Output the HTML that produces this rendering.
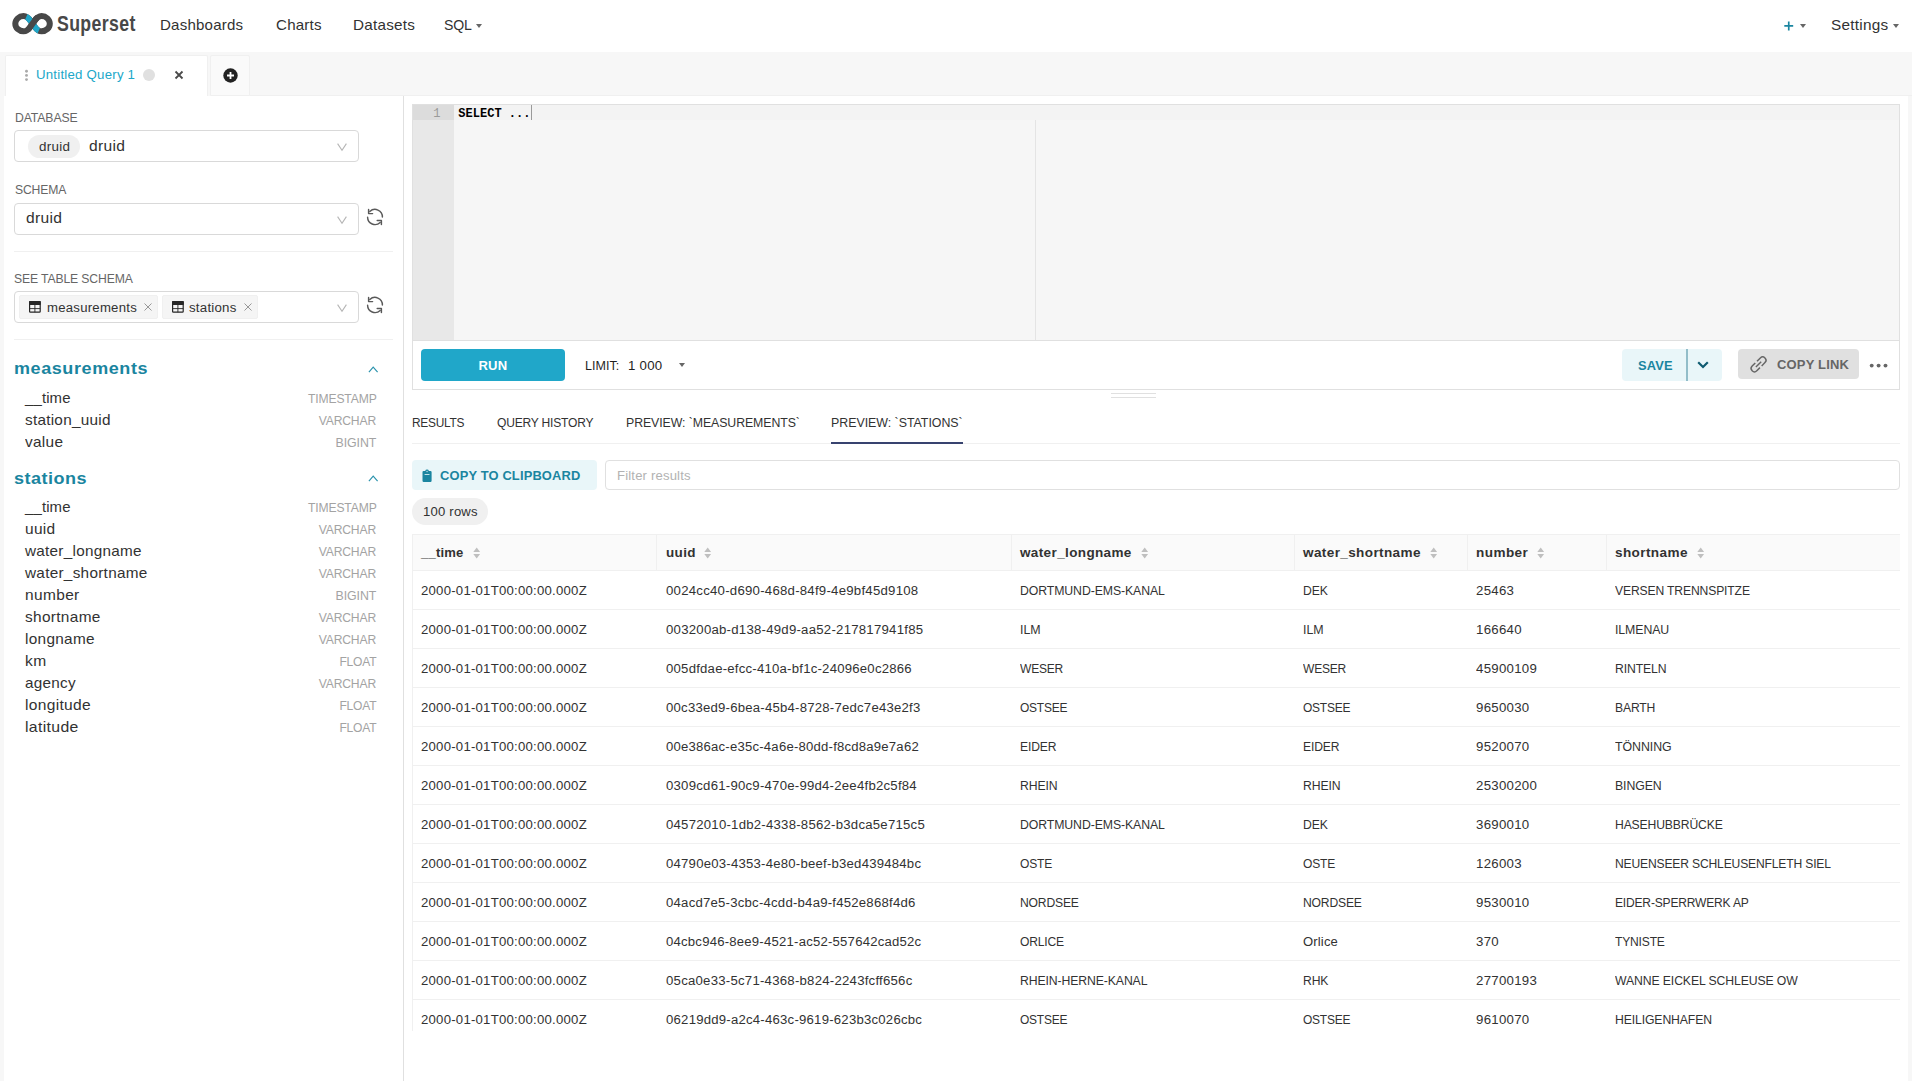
<!DOCTYPE html>
<html><head><meta charset="utf-8"><title>Superset SQL Lab</title>
<style>
html,body{margin:0;padding:0;width:1912px;height:1081px;overflow:hidden;background:#f7f7f7;font-family:"Liberation Sans",sans-serif}
.t{position:absolute;white-space:nowrap}
.r{position:absolute;box-sizing:border-box}
.s{position:absolute;overflow:visible}
</style></head><body>
<div class="r" style="left:0px;top:0px;width:1912px;height:52px;background:#fff"></div>
<svg class="s" style="left:12px;top:12px;" width="42" height="23" viewBox="0 0 42 23"><g fill="none" stroke-width="6.0"><path d="M11.50 4.10 C16.48 4.10 17.84 8.28 20.55 11.70 C23.27 15.12 24.62 19.30 29.60 19.30 A8.2 7.6 0 0 0 29.60 4.10 C24.62 4.10 23.27 8.28 20.55 11.70 C17.84 15.12 16.48 19.30 11.50 19.30 A8.2 7.6 0 0 1 11.50 4.10 Z" stroke="#484848"/><path d="M14.31 4.65 C17.14 5.90 18.43 9.03 20.55 11.70 C22.67 14.37 23.96 17.50 26.79 18.75" stroke="#20a7c9"/><path d="M15.61 17.98 C17.59 16.47 18.79 13.92 20.55 11.70 C22.31 9.48 23.51 6.93 25.49 5.42" stroke="#484848"/></g></svg>
<div class="t" style="left:56.7px;top:13.1px;font-size:22px;line-height:22px;font-weight:700;color:#484848;letter-spacing:0.45px;transform:scaleX(0.805);transform-origin:0 0;font-family:'Liberation Sans', sans-serif">Superset</div>
<div class="t" style="left:160.30px;top:18.00px;font-size:14.5px;line-height:14.5px;font-weight:400;color:#323232;letter-spacing:0.195px;transform:scaleX(1.0389);transform-origin:0 0;font-family:'Liberation Sans', sans-serif;">Dashboards</div>
<div class="t" style="left:275.60px;top:18.00px;font-size:14.5px;line-height:14.5px;font-weight:400;color:#323232;letter-spacing:0.196px;transform:scaleX(1.0430);transform-origin:0 0;font-family:'Liberation Sans', sans-serif;">Charts</div>
<div class="t" style="left:353.30px;top:18.00px;font-size:14.5px;line-height:14.5px;font-weight:400;color:#323232;letter-spacing:0.233px;transform:scaleX(1.0513);transform-origin:0 0;font-family:'Liberation Sans', sans-serif;">Datasets</div>
<div class="t" style="left:443.50px;top:18.00px;font-size:14.5px;line-height:14.5px;font-weight:400;color:#323232;letter-spacing:-0.179px;transform:scaleX(0.9729);transform-origin:0 0;font-family:'Liberation Sans', sans-serif;">SQL</div>
<svg class="s" style="left:476.2px;top:23.8px;" width="6" height="4" viewBox="0 0 6 4"><path d="M0 0 H6 L3 4 Z" fill="#666"/></svg>
<svg class="s" style="left:1783.5px;top:20.5px;" width="10" height="10" viewBox="0 0 10 10"><path d="M4.75 0.4 V9.4 M0.3 4.9 H9.2" stroke="#1a85a0" stroke-width="1.7" fill="none"/></svg>
<svg class="s" style="left:1800px;top:24px;" width="6" height="4" viewBox="0 0 6 4"><path d="M0 0 H6 L3 4 Z" fill="#666"/></svg>
<div class="t" style="left:1831.00px;top:18.00px;font-size:14.5px;line-height:14.5px;font-weight:400;color:#323232;letter-spacing:0.238px;transform:scaleX(1.0576);transform-origin:0 0;font-family:'Liberation Sans', sans-serif;">Settings</div>
<svg class="s" style="left:1893px;top:24px;" width="6" height="4" viewBox="0 0 6 4"><path d="M0 0 H6 L3 4 Z" fill="#666"/></svg>
<div class="r" style="left:0px;top:52px;width:1912px;height:44px;background:#f7f7f7"></div>
<div class="r" style="left:249px;top:95px;width:1663px;height:1px;background:#f0f0f0"></div>
<div class="r" style="left:5px;top:55px;width:203px;height:41px;background:#fff;border:1px solid #f0f0f0;border-bottom:none;border-radius:2px 2px 0 0"></div>
<div class="r" style="left:210px;top:55px;width:40px;height:41px;background:#fafafa;border:1px solid #f0f0f0;border-radius:2px 2px 0 0"></div>
<svg class="s" style="left:24px;top:69px;" width="5" height="13" viewBox="0 0 5 13"><circle cx="2.5" cy="2.2" r="1.45" fill="#aaa"/><circle cx="2.5" cy="6.4" r="1.45" fill="#aaa"/><circle cx="2.5" cy="10.6" r="1.45" fill="#aaa"/></svg>
<div class="t" style="left:36.40px;top:69.00px;font-size:12.5px;line-height:12.5px;font-weight:400;color:#20a7c9;letter-spacing:0.210px;transform:scaleX(1.0590);transform-origin:0 0;font-family:'Liberation Sans', sans-serif;">Untitled Query 1</div>
<svg class="s" style="left:143px;top:69px;" width="12" height="12" viewBox="0 0 12 12"><circle cx="6" cy="6" r="6" fill="#e0e0e0"/></svg>
<svg class="s" style="left:174px;top:70px;" width="10" height="10" viewBox="0 0 10 10"><path d="M1.5 1.5 L8.5 8.5 M8.5 1.5 L1.5 8.5" stroke="#4a4a4a" stroke-width="1.8" fill="none"/></svg>
<svg class="s" style="left:223px;top:67.5px;" width="15" height="15" viewBox="0 0 15 15"><circle cx="7.5" cy="7.5" r="7.2" fill="#222"/><path d="M7.5 4 V11 M4 7.5 H11" stroke="#fff" stroke-width="1.8"/></svg>
<div class="r" style="left:4px;top:96px;width:400px;height:985px;background:#fff;border-right:1px solid #e0e0e0;box-sizing:border-box"></div>
<div class="t" style="left:14.60px;top:112.20px;font-size:12.5px;line-height:12.5px;font-weight:400;color:#666666;letter-spacing:-0.116px;transform:scaleX(0.9789);transform-origin:0 0;font-family:'Liberation Sans', sans-serif;">DATABASE</div>
<div class="r" style="left:14px;top:130px;width:345px;height:32px;border:1px solid #d9d9d9;border-radius:4px;box-sizing:border-box;background:#fff"></div>
<div class="r" style="left:28px;top:135px;width:52px;height:23px;background:#f0f0f0;border-radius:11.5px"></div>
<div class="t" style="left:38.90px;top:141.00px;font-size:12.5px;line-height:12.5px;font-weight:400;color:#323232;letter-spacing:0.247px;transform:scaleX(1.0715);transform-origin:0 0;font-family:'Liberation Sans', sans-serif;">druid</div>
<div class="t" style="left:88.80px;top:139.00px;font-size:14.5px;line-height:14.5px;font-weight:400;color:#323232;letter-spacing:0.301px;transform:scaleX(1.0754);transform-origin:0 0;font-family:'Liberation Sans', sans-serif;">druid</div>
<svg class="s" style="left:337px;top:143px;" width="10" height="8" viewBox="0 0 10 8"><path d="M0.6 0.6 L5.0 7.2 L9.4 0.6" stroke="#b5b5b5" stroke-width="1.1" fill="none"/></svg>
<div class="t" style="left:14.60px;top:184.40px;font-size:12.5px;line-height:12.5px;font-weight:400;color:#666666;letter-spacing:-0.158px;transform:scaleX(0.9740);transform-origin:0 0;font-family:'Liberation Sans', sans-serif;">SCHEMA</div>
<div class="r" style="left:14px;top:203px;width:345px;height:32px;border:1px solid #d9d9d9;border-radius:4px;box-sizing:border-box;background:#fff"></div>
<div class="t" style="left:26.40px;top:210.80px;font-size:14.5px;line-height:14.5px;font-weight:400;color:#323232;letter-spacing:0.301px;transform:scaleX(1.0754);transform-origin:0 0;font-family:'Liberation Sans', sans-serif;">druid</div>
<svg class="s" style="left:337px;top:216px;" width="10" height="8" viewBox="0 0 10 8"><path d="M0.6 0.6 L5.0 7.2 L9.4 0.6" stroke="#b5b5b5" stroke-width="1.1" fill="none"/></svg>
<svg class="s" style="left:362px;top:204px;" width="26" height="26" viewBox="0 0 26 26"><g fill="none" stroke="#595959" stroke-width="1.45" stroke-linejoin="round" stroke-linecap="round"><path d="M20.4 13 A7.4 7.4 0 0 0 7.8 7.6"/><path d="M6.6 5.4 V9.6 H10.6"/><path d="M5.6 13.2 A7.4 7.4 0 0 0 18.2 18.4"/><path d="M15.2 16.4 H19.4 V20.6"/></g></svg>
<div class="r" style="left:14px;top:251px;width:379px;height:1px;background:#f0f0f0"></div>
<div class="t" style="left:14.40px;top:272.50px;font-size:12.5px;line-height:12.5px;font-weight:400;color:#666666;letter-spacing:-0.133px;transform:scaleX(0.9748);transform-origin:0 0;font-family:'Liberation Sans', sans-serif;">SEE TABLE SCHEMA</div>
<div class="r" style="left:14px;top:291px;width:345px;height:32px;border:1px solid #d9d9d9;border-radius:4px;box-sizing:border-box;background:#fff"></div>
<div class="r" style="left:19px;top:295px;width:139px;height:24px;background:#f5f5f5;border:1px solid #f0f0f0;border-radius:2px;box-sizing:border-box"></div>
<svg class="s" style="left:29.1px;top:301px;" width="12" height="12" viewBox="0 0 12 12"><rect x="0.6" y="0.6" width="10.6" height="10.6" rx="0.8" fill="none" stroke="#262626" stroke-width="1.2"/><rect x="0" y="0" width="11.8" height="4" rx="0.8" fill="#262626"/><path d="M0.6 7.6 H11.2 M5.9 4 V11.2" stroke="#262626" stroke-width="0.9"/></svg>
<div class="t" style="left:46.50px;top:301.80px;font-size:12.5px;line-height:12.5px;font-weight:400;color:#323232;letter-spacing:0.231px;transform:scaleX(1.0530);transform-origin:0 0;font-family:'Liberation Sans', sans-serif;">measurements</div>
<svg class="s" style="left:144px;top:303px;" width="8" height="8" viewBox="0 0 8 8"><path d="M0.5 0.5 L7.5 7.5 M7.5 0.5 L0.5 7.5" stroke="#8c8c8c" stroke-width="0.9" fill="none"/></svg>
<div class="r" style="left:162px;top:295px;width:96px;height:24px;background:#f5f5f5;border:1px solid #f0f0f0;border-radius:2px;box-sizing:border-box"></div>
<svg class="s" style="left:172.1px;top:301px;" width="12" height="12" viewBox="0 0 12 12"><rect x="0.6" y="0.6" width="10.6" height="10.6" rx="0.8" fill="none" stroke="#262626" stroke-width="1.2"/><rect x="0" y="0" width="11.8" height="4" rx="0.8" fill="#262626"/><path d="M0.6 7.6 H11.2 M5.9 4 V11.2" stroke="#262626" stroke-width="0.9"/></svg>
<div class="t" style="left:189.40px;top:301.80px;font-size:12.5px;line-height:12.5px;font-weight:400;color:#323232;letter-spacing:0.210px;transform:scaleX(1.0623);transform-origin:0 0;font-family:'Liberation Sans', sans-serif;">stations</div>
<svg class="s" style="left:244px;top:303px;" width="8" height="8" viewBox="0 0 8 8"><path d="M0.5 0.5 L7.5 7.5 M7.5 0.5 L0.5 7.5" stroke="#8c8c8c" stroke-width="0.9" fill="none"/></svg>
<svg class="s" style="left:337px;top:304px;" width="10" height="8" viewBox="0 0 10 8"><path d="M0.6 0.6 L5.0 7.2 L9.4 0.6" stroke="#b5b5b5" stroke-width="1.1" fill="none"/></svg>
<svg class="s" style="left:362px;top:292px;" width="26" height="26" viewBox="0 0 26 26"><g fill="none" stroke="#595959" stroke-width="1.45" stroke-linejoin="round" stroke-linecap="round"><path d="M20.4 13 A7.4 7.4 0 0 0 7.8 7.6"/><path d="M6.6 5.4 V9.6 H10.6"/><path d="M5.6 13.2 A7.4 7.4 0 0 0 18.2 18.4"/><path d="M15.2 16.4 H19.4 V20.6"/></g></svg>
<div class="r" style="left:14px;top:339px;width:379px;height:1px;background:#f0f0f0"></div>
<div class="t" style="left:14.40px;top:360.00px;font-size:16.5px;line-height:16.5px;font-weight:700;color:#1a85a0;letter-spacing:0.538px;transform:scaleX(1.0906);transform-origin:0 0;font-family:'Liberation Sans', sans-serif;">measurements</div>
<svg class="s" style="left:367.5px;top:365.5px;" width="11" height="7" viewBox="0 0 11 7"><path d="M0.9 6.1 L5.2 1.1 L9.6 6.1" stroke="#2b93ad" stroke-width="1.15" fill="none"/></svg>
<div class="t" style="left:24.74px;top:391.00px;font-size:14.5px;line-height:14.5px;font-weight:400;color:#323232;letter-spacing:0.137px;transform:scaleX(1.0291);transform-origin:0 0;font-family:'Liberation Sans', sans-serif;">__time</div>
<div class="t" style="left:305.84px;top:393.00px;font-size:12.5px;line-height:12.5px;font-weight:400;color:#a3a3a3;letter-spacing:-0.154px;transform:scaleX(0.9719);transform-origin:70.76px 0;font-family:'Liberation Sans', sans-serif;">TIMESTAMP</div>
<div class="t" style="left:24.50px;top:413.00px;font-size:14.5px;line-height:14.5px;font-weight:400;color:#323232;letter-spacing:0.236px;transform:scaleX(1.0576);transform-origin:0 0;font-family:'Liberation Sans', sans-serif;">station_uuid</div>
<div class="t" style="left:317.41px;top:415.00px;font-size:12.5px;line-height:12.5px;font-weight:400;color:#a3a3a3;letter-spacing:-0.168px;transform:scaleX(0.9716);transform-origin:59.19px 0;font-family:'Liberation Sans', sans-serif;">VARCHAR</div>
<div class="t" style="left:24.50px;top:435.00px;font-size:14.5px;line-height:14.5px;font-weight:400;color:#323232;letter-spacing:0.269px;transform:scaleX(1.0619);transform-origin:0 0;font-family:'Liberation Sans', sans-serif;">value</div>
<div class="t" style="left:335.18px;top:437.00px;font-size:12.5px;line-height:12.5px;font-weight:400;color:#a3a3a3;letter-spacing:-0.051px;transform:scaleX(0.9892);transform-origin:41.42px 0;font-family:'Liberation Sans', sans-serif;">BIGINT</div>
<div class="t" style="left:14.20px;top:469.60px;font-size:16.5px;line-height:16.5px;font-weight:700;color:#1a85a0;letter-spacing:0.446px;transform:scaleX(1.0924);transform-origin:0 0;font-family:'Liberation Sans', sans-serif;">stations</div>
<svg class="s" style="left:367.5px;top:475px;" width="11" height="7" viewBox="0 0 11 7"><path d="M0.9 6.1 L5.2 1.1 L9.6 6.1" stroke="#2b93ad" stroke-width="1.15" fill="none"/></svg>
<div class="t" style="left:24.74px;top:500.00px;font-size:14.5px;line-height:14.5px;font-weight:400;color:#323232;letter-spacing:0.137px;transform:scaleX(1.0291);transform-origin:0 0;font-family:'Liberation Sans', sans-serif;">__time</div>
<div class="t" style="left:305.84px;top:502.00px;font-size:12.5px;line-height:12.5px;font-weight:400;color:#a3a3a3;letter-spacing:-0.154px;transform:scaleX(0.9719);transform-origin:70.76px 0;font-family:'Liberation Sans', sans-serif;">TIMESTAMP</div>
<div class="t" style="left:24.50px;top:522.00px;font-size:14.5px;line-height:14.5px;font-weight:400;color:#323232;letter-spacing:0.291px;transform:scaleX(1.0680);transform-origin:0 0;font-family:'Liberation Sans', sans-serif;">uuid</div>
<div class="t" style="left:317.41px;top:524.00px;font-size:12.5px;line-height:12.5px;font-weight:400;color:#a3a3a3;letter-spacing:-0.168px;transform:scaleX(0.9716);transform-origin:59.19px 0;font-family:'Liberation Sans', sans-serif;">VARCHAR</div>
<div class="t" style="left:24.53px;top:544.00px;font-size:14.5px;line-height:14.5px;font-weight:400;color:#323232;letter-spacing:0.260px;transform:scaleX(1.0537);transform-origin:0 0;font-family:'Liberation Sans', sans-serif;">water_longname</div>
<div class="t" style="left:317.41px;top:546.00px;font-size:12.5px;line-height:12.5px;font-weight:400;color:#a3a3a3;letter-spacing:-0.168px;transform:scaleX(0.9716);transform-origin:59.19px 0;font-family:'Liberation Sans', sans-serif;">VARCHAR</div>
<div class="t" style="left:24.53px;top:566.00px;font-size:14.5px;line-height:14.5px;font-weight:400;color:#323232;letter-spacing:0.266px;transform:scaleX(1.0565);transform-origin:0 0;font-family:'Liberation Sans', sans-serif;">water_shortname</div>
<div class="t" style="left:317.41px;top:568.00px;font-size:12.5px;line-height:12.5px;font-weight:400;color:#a3a3a3;letter-spacing:-0.168px;transform:scaleX(0.9716);transform-origin:59.19px 0;font-family:'Liberation Sans', sans-serif;">VARCHAR</div>
<div class="t" style="left:24.50px;top:588.00px;font-size:14.5px;line-height:14.5px;font-weight:400;color:#323232;letter-spacing:0.342px;transform:scaleX(1.0668);transform-origin:0 0;font-family:'Liberation Sans', sans-serif;">number</div>
<div class="t" style="left:335.18px;top:590.00px;font-size:12.5px;line-height:12.5px;font-weight:400;color:#a3a3a3;letter-spacing:-0.051px;transform:scaleX(0.9892);transform-origin:41.42px 0;font-family:'Liberation Sans', sans-serif;">BIGINT</div>
<div class="t" style="left:24.50px;top:610.00px;font-size:14.5px;line-height:14.5px;font-weight:400;color:#323232;letter-spacing:0.300px;transform:scaleX(1.0628);transform-origin:0 0;font-family:'Liberation Sans', sans-serif;">shortname</div>
<div class="t" style="left:317.41px;top:612.00px;font-size:12.5px;line-height:12.5px;font-weight:400;color:#a3a3a3;letter-spacing:-0.168px;transform:scaleX(0.9716);transform-origin:59.19px 0;font-family:'Liberation Sans', sans-serif;">VARCHAR</div>
<div class="t" style="left:24.50px;top:632.00px;font-size:14.5px;line-height:14.5px;font-weight:400;color:#323232;letter-spacing:0.294px;transform:scaleX(1.0587);transform-origin:0 0;font-family:'Liberation Sans', sans-serif;">longname</div>
<div class="t" style="left:317.41px;top:634.00px;font-size:12.5px;line-height:12.5px;font-weight:400;color:#a3a3a3;letter-spacing:-0.168px;transform:scaleX(0.9716);transform-origin:59.19px 0;font-family:'Liberation Sans', sans-serif;">VARCHAR</div>
<div class="t" style="left:24.50px;top:654.00px;font-size:14.5px;line-height:14.5px;font-weight:400;color:#323232;letter-spacing:0.450px;transform:scaleX(1.0750);transform-origin:0 0;font-family:'Liberation Sans', sans-serif;">km</div>
<div class="t" style="left:338.03px;top:656.00px;font-size:12.5px;line-height:12.5px;font-weight:400;color:#a3a3a3;letter-spacing:-0.195px;transform:scaleX(0.9641);transform-origin:38.57px 0;font-family:'Liberation Sans', sans-serif;">FLOAT</div>
<div class="t" style="left:24.50px;top:676.00px;font-size:14.5px;line-height:14.5px;font-weight:400;color:#323232;letter-spacing:0.264px;transform:scaleX(1.0536);transform-origin:0 0;font-family:'Liberation Sans', sans-serif;">agency</div>
<div class="t" style="left:317.41px;top:678.00px;font-size:12.5px;line-height:12.5px;font-weight:400;color:#a3a3a3;letter-spacing:-0.168px;transform:scaleX(0.9716);transform-origin:59.19px 0;font-family:'Liberation Sans', sans-serif;">VARCHAR</div>
<div class="t" style="left:24.50px;top:698.00px;font-size:14.5px;line-height:14.5px;font-weight:400;color:#323232;letter-spacing:0.295px;transform:scaleX(1.0725);transform-origin:0 0;font-family:'Liberation Sans', sans-serif;">longitude</div>
<div class="t" style="left:338.03px;top:700.00px;font-size:12.5px;line-height:12.5px;font-weight:400;color:#a3a3a3;letter-spacing:-0.195px;transform:scaleX(0.9641);transform-origin:38.57px 0;font-family:'Liberation Sans', sans-serif;">FLOAT</div>
<div class="t" style="left:24.50px;top:720.00px;font-size:14.5px;line-height:14.5px;font-weight:400;color:#323232;letter-spacing:0.319px;transform:scaleX(1.0892);transform-origin:0 0;font-family:'Liberation Sans', sans-serif;">latitude</div>
<div class="t" style="left:338.03px;top:722.00px;font-size:12.5px;line-height:12.5px;font-weight:400;color:#a3a3a3;letter-spacing:-0.195px;transform:scaleX(0.9641);transform-origin:38.57px 0;font-family:'Liberation Sans', sans-serif;">FLOAT</div>
<div class="r" style="left:404px;top:96px;width:1504px;height:985px;background:#fff"></div>
<div class="r" style="left:412px;top:104px;width:1488px;height:237px;background:#f6f6f6;border:1px solid #e0e0e0;border-bottom:1px solid #e0e0e0;box-sizing:border-box"></div>
<div class="r" style="left:413px;top:105px;width:41px;height:235px;background:#e8e8e8"></div>
<div class="r" style="left:454px;top:105px;width:1445px;height:15px;background:#f3f3f3"></div>
<div class="r" style="left:413px;top:105px;width:41px;height:15px;background:#dcdcdc"></div>
<div class="r" style="left:1035px;top:120px;width:1px;height:220px;background:#e4e4e4"></div>
<div class="t" style="left:433.30px;top:107.80px;font-size:12.0px;line-height:12.0px;font-weight:400;color:#9a9a9a;letter-spacing:0.023px;font-family:'Liberation Mono', monospace;">1</div>
<div class="t" style="left:458.30px;top:107.80px;font-size:12.0px;line-height:12.0px;font-weight:700;color:#000;letter-spacing:0.023px;font-family:'Liberation Mono', monospace;">SELECT ...</div>
<div class="r" style="left:530.5px;top:105px;width:1.0px;height:15px;background:#9a9a9a"></div>
<div class="r" style="left:412px;top:341px;width:1488px;height:49px;background:#fff;border:1px solid #e0e0e0;border-top:none;box-sizing:border-box"></div>
<div class="r" style="left:421px;top:349px;width:144px;height:32px;background:#20a7c9;border-radius:4px"></div>
<div class="t" style="left:479.21px;top:360.00px;font-size:12.5px;line-height:12.5px;font-weight:700;color:#fff;letter-spacing:0.249px;transform:scaleX(1.0431);transform-origin:13.79px 0;font-family:'Liberation Sans', sans-serif;">RUN</div>
<div class="t" style="left:585.40px;top:360.00px;font-size:12.5px;line-height:12.5px;font-weight:400;color:#1f1f1f;letter-spacing:0.009px;transform:scaleX(1.0024);transform-origin:0 0;font-family:'Liberation Sans', sans-serif;">LIMIT:</div>
<div class="t" style="left:627.60px;top:360.00px;font-size:12.5px;line-height:12.5px;font-weight:400;color:#1f1f1f;letter-spacing:0.232px;transform:scaleX(1.0589);transform-origin:0 0;font-family:'Liberation Sans', sans-serif;">1 000</div>
<svg class="s" style="left:679px;top:363.2px;" width="6" height="4" viewBox="0 0 6 4"><path d="M0 0 H6 L3 4 Z" fill="#666"/></svg>
<div class="r" style="left:1622px;top:349px;width:100px;height:32px;background:#e9f6f9;border-radius:4px"></div>
<div class="r" style="left:1686px;top:349px;width:2px;height:32px;background:#92bdc9"></div>
<div class="t" style="left:1638.20px;top:359.80px;font-size:12.5px;line-height:12.5px;font-weight:700;color:#1a85a0;letter-spacing:0.145px;transform:scaleX(1.0270);transform-origin:0 0;font-family:'Liberation Sans', sans-serif;">SAVE</div>
<svg class="s" style="left:1697px;top:361px;" width="12" height="8" viewBox="0 0 12 8"><path d="M1.2 1.2 L6 6 L10.8 1.2" stroke="#0f5b71" stroke-width="2.2" fill="none"/></svg>
<div class="r" style="left:1738px;top:349px;width:121px;height:30px;background:#e0e0e0;border-radius:4px"></div>
<svg class="s" style="left:1744px;top:350px;" width="30" height="28" viewBox="0 0 30 28"><g transform="translate(14.4 14.5) rotate(-45) scale(0.94)" fill="none" stroke="#666" stroke-width="1.55"><path d="M1.4 -3.5 H6.4 A3.5 3.5 0 0 1 6.4 3.5 H1.4"/><path d="M-1.2 -3.5 H-5.9 A3.5 3.5 0 0 0 -5.9 3.5 H-1.2"/><path d="M-3.8 0 H4.2"/></g></svg>
<div class="t" style="left:1777.00px;top:359.00px;font-size:12.5px;line-height:12.5px;font-weight:700;color:#666666;letter-spacing:0.184px;transform:scaleX(1.0379);transform-origin:0 0;font-family:'Liberation Sans', sans-serif;">COPY LINK</div>
<svg class="s" style="left:1869px;top:362.5px;" width="20" height="6" viewBox="0 0 20 6"><circle cx="2.7" cy="2.6" r="1.95" fill="#666"/><circle cx="9.6" cy="2.6" r="1.95" fill="#666"/><circle cx="16.5" cy="2.6" r="1.95" fill="#666"/></svg>
<div class="r" style="left:1111px;top:393px;width:45px;height:1px;background:#e0e0e0"></div>
<div class="r" style="left:1111px;top:397px;width:45px;height:1px;background:#e0e0e0"></div>
<div class="t" style="left:412.40px;top:417.00px;font-size:12.5px;line-height:12.5px;font-weight:400;color:#323232;letter-spacing:-0.265px;transform:scaleX(0.9532);transform-origin:0 0;font-family:'Liberation Sans', sans-serif;">RESULTS</div>
<div class="t" style="left:496.50px;top:417.00px;font-size:12.5px;line-height:12.5px;font-weight:400;color:#323232;letter-spacing:-0.198px;transform:scaleX(0.9637);transform-origin:0 0;font-family:'Liberation Sans', sans-serif;">QUERY HISTORY</div>
<div class="t" style="left:625.50px;top:417.00px;font-size:12.5px;line-height:12.5px;font-weight:400;color:#323232;letter-spacing:-0.078px;transform:scaleX(0.9851);transform-origin:0 0;font-family:'Liberation Sans', sans-serif;">PREVIEW: `MEASUREMENTS`</div>
<div class="t" style="left:831.00px;top:417.00px;font-size:12.5px;line-height:12.5px;font-weight:400;color:#323232;letter-spacing:-0.035px;transform:scaleX(0.9926);transform-origin:0 0;font-family:'Liberation Sans', sans-serif;">PREVIEW: `STATIONS`</div>
<div class="r" style="left:412px;top:443px;width:1488px;height:1px;background:#f0f0f0"></div>
<div class="r" style="left:831px;top:442px;width:132px;height:2px;background:#38436f"></div>
<div class="r" style="left:412px;top:460px;width:185px;height:30px;background:#e9f6f9;border-radius:4px"></div>
<svg class="s" style="left:421.5px;top:469px;" width="11" height="14" viewBox="0 0 11 14"><path d="M1.6 1.9 H3.2 A1.9 1.9 0 0 1 6.9 1.9 H8.4 A1.2 1.2 0 0 1 9.6 3.1 V11.8 A1.2 1.2 0 0 1 8.4 13 H1.7 A1.2 1.2 0 0 1 0.5 11.8 V3.1 A1.2 1.2 0 0 1 1.6 1.9 Z" fill="#1a85a0"/><circle cx="5.05" cy="2.5" r="0.65" fill="#c9e6ee"/><rect x="2.6" y="5.1" width="4.9" height="0.9" fill="#d5ecf2"/></svg>
<div class="t" style="left:439.50px;top:469.80px;font-size:12.5px;line-height:12.5px;font-weight:700;color:#1a85a0;letter-spacing:0.157px;transform:scaleX(1.0309);transform-origin:0 0;font-family:'Liberation Sans', sans-serif;">COPY TO CLIPBOARD</div>
<div class="r" style="left:605px;top:460px;width:1295px;height:30px;border:1px solid #e0e0e0;border-radius:4px;box-sizing:border-box"></div>
<div class="t" style="left:616.80px;top:470.00px;font-size:12.5px;line-height:12.5px;font-weight:400;color:#b2b2b2;letter-spacing:0.154px;transform:scaleX(1.0500);transform-origin:0 0;font-family:'Liberation Sans', sans-serif;">Filter results</div>
<div class="r" style="left:412px;top:498px;width:76px;height:27px;background:#f0f0f0;border-radius:13.5px"></div>
<div class="t" style="left:423.40px;top:506.00px;font-size:12.5px;line-height:12.5px;font-weight:400;color:#323232;letter-spacing:0.194px;transform:scaleX(1.0482);transform-origin:0 0;font-family:'Liberation Sans', sans-serif;">100 rows</div>
<div class="r" style="left:412px;top:534px;width:1488px;height:37px;background:#fafafa;border-top:1px solid #f0f0f0;border-bottom:1px solid #f0f0f0;box-sizing:border-box"></div>
<div class="r" style="left:412px;top:534px;width:1px;height:497px;background:#f0f0f0"></div>
<div class="r" style="left:656px;top:535px;width:1px;height:35px;background:#f0f0f0"></div>
<div class="r" style="left:1011px;top:535px;width:1px;height:35px;background:#f0f0f0"></div>
<div class="r" style="left:1294px;top:535px;width:1px;height:35px;background:#f0f0f0"></div>
<div class="r" style="left:1467px;top:535px;width:1px;height:35px;background:#f0f0f0"></div>
<div class="r" style="left:1606px;top:535px;width:1px;height:35px;background:#f0f0f0"></div>
<div class="t" style="left:421.33px;top:547.00px;font-size:12.5px;line-height:12.5px;font-weight:700;color:#323232;letter-spacing:0.184px;transform:scaleX(1.0437);transform-origin:0 0;font-family:'Liberation Sans', sans-serif;">__time</div>
<svg class="s" style="left:472.6921875px;top:547px;" width="8" height="12" viewBox="0 0 8 12"><path d="M0.3 5 L3.7 0.6 L7.1 5 Z M0.3 7 L3.7 11.4 L7.1 7 Z" fill="#bfbfbf"/></svg>
<div class="t" style="left:665.60px;top:547.00px;font-size:12.5px;line-height:12.5px;font-weight:700;color:#323232;letter-spacing:0.316px;transform:scaleX(1.0776);transform-origin:0 0;font-family:'Liberation Sans', sans-serif;">uuid</div>
<svg class="s" style="left:704.3890625px;top:547px;" width="8" height="12" viewBox="0 0 8 12"><path d="M0.3 5 L3.7 0.6 L7.1 5 Z M0.3 7 L3.7 11.4 L7.1 7 Z" fill="#bfbfbf"/></svg>
<div class="t" style="left:1020.35px;top:547.00px;font-size:12.5px;line-height:12.5px;font-weight:700;color:#323232;letter-spacing:0.347px;transform:scaleX(1.0798);transform-origin:0 0;font-family:'Liberation Sans', sans-serif;">water_longname</div>
<svg class="s" style="left:1141.05px;top:547px;" width="8" height="12" viewBox="0 0 8 12"><path d="M0.3 5 L3.7 0.6 L7.1 5 Z M0.3 7 L3.7 11.4 L7.1 7 Z" fill="#bfbfbf"/></svg>
<div class="t" style="left:1303.05px;top:547.00px;font-size:12.5px;line-height:12.5px;font-weight:700;color:#323232;letter-spacing:0.353px;transform:scaleX(1.0831);transform-origin:0 0;font-family:'Liberation Sans', sans-serif;">water_shortname</div>
<svg class="s" style="left:1429.84375px;top:547px;" width="8" height="12" viewBox="0 0 8 12"><path d="M0.3 5 L3.7 0.6 L7.1 5 Z M0.3 7 L3.7 11.4 L7.1 7 Z" fill="#bfbfbf"/></svg>
<div class="t" style="left:1476.00px;top:547.00px;font-size:12.5px;line-height:12.5px;font-weight:700;color:#323232;letter-spacing:0.394px;transform:scaleX(1.0838);transform-origin:0 0;font-family:'Liberation Sans', sans-serif;">number</div>
<svg class="s" style="left:1537.236328125px;top:547px;" width="8" height="12" viewBox="0 0 8 12"><path d="M0.3 5 L3.7 0.6 L7.1 5 Z M0.3 7 L3.7 11.4 L7.1 7 Z" fill="#bfbfbf"/></svg>
<div class="t" style="left:1614.70px;top:547.00px;font-size:12.5px;line-height:12.5px;font-weight:700;color:#323232;letter-spacing:0.367px;transform:scaleX(1.0842);transform-origin:0 0;font-family:'Liberation Sans', sans-serif;">shortname</div>
<svg class="s" style="left:1696.5671875px;top:547px;" width="8" height="12" viewBox="0 0 8 12"><path d="M0.3 5 L3.7 0.6 L7.1 5 Z M0.3 7 L3.7 11.4 L7.1 7 Z" fill="#bfbfbf"/></svg>
<div class="t" style="left:421.20px;top:584.80px;font-size:12.5px;line-height:12.5px;font-weight:400;color:#323232;letter-spacing:0.217px;transform:scaleX(1.0540);transform-origin:0 0;font-family:'Liberation Sans', sans-serif;">2000-01-01T00:00:00.000Z</div>
<div class="t" style="left:665.60px;top:584.80px;font-size:12.5px;line-height:12.5px;font-weight:400;color:#323232;letter-spacing:0.228px;transform:scaleX(1.0563);transform-origin:0 0;font-family:'Liberation Sans', sans-serif;">0024cc40-d690-468d-84f9-4e9bf45d9108</div>
<div class="t" style="left:1020.30px;top:584.80px;font-size:12.5px;line-height:12.5px;font-weight:400;color:#323232;letter-spacing:-0.097px;transform:scaleX(0.9827);transform-origin:0 0;font-family:'Liberation Sans', sans-serif;">DORTMUND-EMS-KANAL</div>
<div class="t" style="left:1303.00px;top:584.80px;font-size:12.5px;line-height:12.5px;font-weight:400;color:#323232;letter-spacing:-0.138px;transform:scaleX(0.9764);transform-origin:0 0;font-family:'Liberation Sans', sans-serif;">DEK</div>
<div class="t" style="left:1476.00px;top:584.80px;font-size:12.5px;line-height:12.5px;font-weight:400;color:#323232;letter-spacing:0.258px;transform:scaleX(1.0589);transform-origin:0 0;font-family:'Liberation Sans', sans-serif;">25463</div>
<div class="t" style="left:1614.70px;top:584.80px;font-size:12.5px;line-height:12.5px;font-weight:400;color:#323232;letter-spacing:-0.151px;transform:scaleX(0.9719);transform-origin:0 0;font-family:'Liberation Sans', sans-serif;">VERSEN TRENNSPITZE</div>
<div class="r" style="left:413px;top:609px;width:1487px;height:1px;background:#f0f0f0"></div>
<div class="t" style="left:421.20px;top:623.80px;font-size:12.5px;line-height:12.5px;font-weight:400;color:#323232;letter-spacing:0.217px;transform:scaleX(1.0540);transform-origin:0 0;font-family:'Liberation Sans', sans-serif;">2000-01-01T00:00:00.000Z</div>
<div class="t" style="left:665.60px;top:623.80px;font-size:12.5px;line-height:12.5px;font-weight:400;color:#323232;letter-spacing:0.228px;transform:scaleX(1.0552);transform-origin:0 0;font-family:'Liberation Sans', sans-serif;">003200ab-d138-49d9-aa52-217817941f85</div>
<div class="t" style="left:1020.30px;top:623.80px;font-size:12.5px;line-height:12.5px;font-weight:400;color:#323232;letter-spacing:-0.035px;transform:scaleX(0.9925);transform-origin:0 0;font-family:'Liberation Sans', sans-serif;">ILM</div>
<div class="t" style="left:1303.00px;top:623.80px;font-size:12.5px;line-height:12.5px;font-weight:400;color:#323232;letter-spacing:-0.035px;transform:scaleX(0.9925);transform-origin:0 0;font-family:'Liberation Sans', sans-serif;">ILM</div>
<div class="t" style="left:1476.00px;top:623.80px;font-size:12.5px;line-height:12.5px;font-weight:400;color:#323232;letter-spacing:0.258px;transform:scaleX(1.0589);transform-origin:0 0;font-family:'Liberation Sans', sans-serif;">166640</div>
<div class="t" style="left:1614.70px;top:623.80px;font-size:12.5px;line-height:12.5px;font-weight:400;color:#323232;letter-spacing:-0.083px;transform:scaleX(0.9845);transform-origin:0 0;font-family:'Liberation Sans', sans-serif;">ILMENAU</div>
<div class="r" style="left:413px;top:648px;width:1487px;height:1px;background:#f0f0f0"></div>
<div class="t" style="left:421.20px;top:662.80px;font-size:12.5px;line-height:12.5px;font-weight:400;color:#323232;letter-spacing:0.217px;transform:scaleX(1.0540);transform-origin:0 0;font-family:'Liberation Sans', sans-serif;">2000-01-01T00:00:00.000Z</div>
<div class="t" style="left:665.60px;top:662.80px;font-size:12.5px;line-height:12.5px;font-weight:400;color:#323232;letter-spacing:0.211px;transform:scaleX(1.0532);transform-origin:0 0;font-family:'Liberation Sans', sans-serif;">005dfdae-efcc-410a-bf1c-24096e0c2866</div>
<div class="t" style="left:1020.30px;top:662.80px;font-size:12.5px;line-height:12.5px;font-weight:400;color:#323232;letter-spacing:-0.237px;transform:scaleX(0.9627);transform-origin:0 0;font-family:'Liberation Sans', sans-serif;">WESER</div>
<div class="t" style="left:1303.00px;top:662.80px;font-size:12.5px;line-height:12.5px;font-weight:400;color:#323232;letter-spacing:-0.237px;transform:scaleX(0.9627);transform-origin:0 0;font-family:'Liberation Sans', sans-serif;">WESER</div>
<div class="t" style="left:1476.00px;top:662.80px;font-size:12.5px;line-height:12.5px;font-weight:400;color:#323232;letter-spacing:0.258px;transform:scaleX(1.0589);transform-origin:0 0;font-family:'Liberation Sans', sans-serif;">45900109</div>
<div class="t" style="left:1614.70px;top:662.80px;font-size:12.5px;line-height:12.5px;font-weight:400;color:#323232;letter-spacing:-0.120px;transform:scaleX(0.9770);transform-origin:0 0;font-family:'Liberation Sans', sans-serif;">RINTELN</div>
<div class="r" style="left:413px;top:687px;width:1487px;height:1px;background:#f0f0f0"></div>
<div class="t" style="left:421.20px;top:701.80px;font-size:12.5px;line-height:12.5px;font-weight:400;color:#323232;letter-spacing:0.217px;transform:scaleX(1.0540);transform-origin:0 0;font-family:'Liberation Sans', sans-serif;">2000-01-01T00:00:00.000Z</div>
<div class="t" style="left:665.60px;top:701.80px;font-size:12.5px;line-height:12.5px;font-weight:400;color:#323232;letter-spacing:0.214px;transform:scaleX(1.0520);transform-origin:0 0;font-family:'Liberation Sans', sans-serif;">00c33ed9-6bea-45b4-8728-7edc7e43e2f3</div>
<div class="t" style="left:1020.30px;top:701.80px;font-size:12.5px;line-height:12.5px;font-weight:400;color:#323232;letter-spacing:-0.246px;transform:scaleX(0.9582);transform-origin:0 0;font-family:'Liberation Sans', sans-serif;">OSTSEE</div>
<div class="t" style="left:1303.00px;top:701.80px;font-size:12.5px;line-height:12.5px;font-weight:400;color:#323232;letter-spacing:-0.246px;transform:scaleX(0.9582);transform-origin:0 0;font-family:'Liberation Sans', sans-serif;">OSTSEE</div>
<div class="t" style="left:1476.00px;top:701.80px;font-size:12.5px;line-height:12.5px;font-weight:400;color:#323232;letter-spacing:0.258px;transform:scaleX(1.0589);transform-origin:0 0;font-family:'Liberation Sans', sans-serif;">9650030</div>
<div class="t" style="left:1614.70px;top:701.80px;font-size:12.5px;line-height:12.5px;font-weight:400;color:#323232;letter-spacing:-0.154px;transform:scaleX(0.9732);transform-origin:0 0;font-family:'Liberation Sans', sans-serif;">BARTH</div>
<div class="r" style="left:413px;top:726px;width:1487px;height:1px;background:#f0f0f0"></div>
<div class="t" style="left:421.20px;top:740.80px;font-size:12.5px;line-height:12.5px;font-weight:400;color:#323232;letter-spacing:0.217px;transform:scaleX(1.0540);transform-origin:0 0;font-family:'Liberation Sans', sans-serif;">2000-01-01T00:00:00.000Z</div>
<div class="t" style="left:665.60px;top:740.80px;font-size:12.5px;line-height:12.5px;font-weight:400;color:#323232;letter-spacing:0.205px;transform:scaleX(1.0498);transform-origin:0 0;font-family:'Liberation Sans', sans-serif;">00e386ac-e35c-4a6e-80dd-f8cd8a9e7a62</div>
<div class="t" style="left:1020.30px;top:740.80px;font-size:12.5px;line-height:12.5px;font-weight:400;color:#323232;letter-spacing:-0.158px;transform:scaleX(0.9698);transform-origin:0 0;font-family:'Liberation Sans', sans-serif;">EIDER</div>
<div class="t" style="left:1303.00px;top:740.80px;font-size:12.5px;line-height:12.5px;font-weight:400;color:#323232;letter-spacing:-0.158px;transform:scaleX(0.9698);transform-origin:0 0;font-family:'Liberation Sans', sans-serif;">EIDER</div>
<div class="t" style="left:1476.00px;top:740.80px;font-size:12.5px;line-height:12.5px;font-weight:400;color:#323232;letter-spacing:0.258px;transform:scaleX(1.0589);transform-origin:0 0;font-family:'Liberation Sans', sans-serif;">9520070</div>
<div class="t" style="left:1614.70px;top:740.80px;font-size:12.5px;line-height:12.5px;font-weight:400;color:#323232;letter-spacing:-0.063px;transform:scaleX(0.9886);transform-origin:0 0;font-family:'Liberation Sans', sans-serif;">TÖNNING</div>
<div class="r" style="left:413px;top:765px;width:1487px;height:1px;background:#f0f0f0"></div>
<div class="t" style="left:421.20px;top:779.80px;font-size:12.5px;line-height:12.5px;font-weight:400;color:#323232;letter-spacing:0.217px;transform:scaleX(1.0540);transform-origin:0 0;font-family:'Liberation Sans', sans-serif;">2000-01-01T00:00:00.000Z</div>
<div class="t" style="left:665.60px;top:779.80px;font-size:12.5px;line-height:12.5px;font-weight:400;color:#323232;letter-spacing:0.220px;transform:scaleX(1.0544);transform-origin:0 0;font-family:'Liberation Sans', sans-serif;">0309cd61-90c9-470e-99d4-2ee4fb2c5f84</div>
<div class="t" style="left:1020.30px;top:779.80px;font-size:12.5px;line-height:12.5px;font-weight:400;color:#323232;letter-spacing:-0.117px;transform:scaleX(0.9779);transform-origin:0 0;font-family:'Liberation Sans', sans-serif;">RHEIN</div>
<div class="t" style="left:1303.00px;top:779.80px;font-size:12.5px;line-height:12.5px;font-weight:400;color:#323232;letter-spacing:-0.117px;transform:scaleX(0.9779);transform-origin:0 0;font-family:'Liberation Sans', sans-serif;">RHEIN</div>
<div class="t" style="left:1476.00px;top:779.80px;font-size:12.5px;line-height:12.5px;font-weight:400;color:#323232;letter-spacing:0.258px;transform:scaleX(1.0589);transform-origin:0 0;font-family:'Liberation Sans', sans-serif;">25300200</div>
<div class="t" style="left:1614.70px;top:779.80px;font-size:12.5px;line-height:12.5px;font-weight:400;color:#323232;letter-spacing:-0.089px;transform:scaleX(0.9835);transform-origin:0 0;font-family:'Liberation Sans', sans-serif;">BINGEN</div>
<div class="r" style="left:413px;top:804px;width:1487px;height:1px;background:#f0f0f0"></div>
<div class="t" style="left:421.20px;top:818.80px;font-size:12.5px;line-height:12.5px;font-weight:400;color:#323232;letter-spacing:0.217px;transform:scaleX(1.0540);transform-origin:0 0;font-family:'Liberation Sans', sans-serif;">2000-01-01T00:00:00.000Z</div>
<div class="t" style="left:665.60px;top:818.80px;font-size:12.5px;line-height:12.5px;font-weight:400;color:#323232;letter-spacing:0.224px;transform:scaleX(1.0536);transform-origin:0 0;font-family:'Liberation Sans', sans-serif;">04572010-1db2-4338-8562-b3dca5e715c5</div>
<div class="t" style="left:1020.30px;top:818.80px;font-size:12.5px;line-height:12.5px;font-weight:400;color:#323232;letter-spacing:-0.097px;transform:scaleX(0.9827);transform-origin:0 0;font-family:'Liberation Sans', sans-serif;">DORTMUND-EMS-KANAL</div>
<div class="t" style="left:1303.00px;top:818.80px;font-size:12.5px;line-height:12.5px;font-weight:400;color:#323232;letter-spacing:-0.138px;transform:scaleX(0.9764);transform-origin:0 0;font-family:'Liberation Sans', sans-serif;">DEK</div>
<div class="t" style="left:1476.00px;top:818.80px;font-size:12.5px;line-height:12.5px;font-weight:400;color:#323232;letter-spacing:0.258px;transform:scaleX(1.0589);transform-origin:0 0;font-family:'Liberation Sans', sans-serif;">3690010</div>
<div class="t" style="left:1614.70px;top:818.80px;font-size:12.5px;line-height:12.5px;font-weight:400;color:#323232;letter-spacing:-0.154px;transform:scaleX(0.9740);transform-origin:0 0;font-family:'Liberation Sans', sans-serif;">HASEHUBBRÜCKE</div>
<div class="r" style="left:413px;top:843px;width:1487px;height:1px;background:#f0f0f0"></div>
<div class="t" style="left:421.20px;top:857.80px;font-size:12.5px;line-height:12.5px;font-weight:400;color:#323232;letter-spacing:0.217px;transform:scaleX(1.0540);transform-origin:0 0;font-family:'Liberation Sans', sans-serif;">2000-01-01T00:00:00.000Z</div>
<div class="t" style="left:665.60px;top:857.80px;font-size:12.5px;line-height:12.5px;font-weight:400;color:#323232;letter-spacing:0.214px;transform:scaleX(1.0518);transform-origin:0 0;font-family:'Liberation Sans', sans-serif;">04790e03-4353-4e80-beef-b3ed439484bc</div>
<div class="t" style="left:1020.30px;top:857.80px;font-size:12.5px;line-height:12.5px;font-weight:400;color:#323232;letter-spacing:-0.214px;transform:scaleX(0.9637);transform-origin:0 0;font-family:'Liberation Sans', sans-serif;">OSTE</div>
<div class="t" style="left:1303.00px;top:857.80px;font-size:12.5px;line-height:12.5px;font-weight:400;color:#323232;letter-spacing:-0.214px;transform:scaleX(0.9637);transform-origin:0 0;font-family:'Liberation Sans', sans-serif;">OSTE</div>
<div class="t" style="left:1476.00px;top:857.80px;font-size:12.5px;line-height:12.5px;font-weight:400;color:#323232;letter-spacing:0.258px;transform:scaleX(1.0589);transform-origin:0 0;font-family:'Liberation Sans', sans-serif;">126003</div>
<div class="t" style="left:1614.70px;top:857.80px;font-size:12.5px;line-height:12.5px;font-weight:400;color:#323232;letter-spacing:-0.171px;transform:scaleX(0.9684);transform-origin:0 0;font-family:'Liberation Sans', sans-serif;">NEUENSEER SCHLEUSENFLETH SIEL</div>
<div class="r" style="left:413px;top:882px;width:1487px;height:1px;background:#f0f0f0"></div>
<div class="t" style="left:421.20px;top:896.80px;font-size:12.5px;line-height:12.5px;font-weight:400;color:#323232;letter-spacing:0.217px;transform:scaleX(1.0540);transform-origin:0 0;font-family:'Liberation Sans', sans-serif;">2000-01-01T00:00:00.000Z</div>
<div class="t" style="left:665.60px;top:896.80px;font-size:12.5px;line-height:12.5px;font-weight:400;color:#323232;letter-spacing:0.213px;transform:scaleX(1.0527);transform-origin:0 0;font-family:'Liberation Sans', sans-serif;">04acd7e5-3cbc-4cdd-b4a9-f452e868f4d6</div>
<div class="t" style="left:1020.30px;top:896.80px;font-size:12.5px;line-height:12.5px;font-weight:400;color:#323232;letter-spacing:-0.179px;transform:scaleX(0.9705);transform-origin:0 0;font-family:'Liberation Sans', sans-serif;">NORDSEE</div>
<div class="t" style="left:1303.00px;top:896.80px;font-size:12.5px;line-height:12.5px;font-weight:400;color:#323232;letter-spacing:-0.179px;transform:scaleX(0.9705);transform-origin:0 0;font-family:'Liberation Sans', sans-serif;">NORDSEE</div>
<div class="t" style="left:1476.00px;top:896.80px;font-size:12.5px;line-height:12.5px;font-weight:400;color:#323232;letter-spacing:0.258px;transform:scaleX(1.0589);transform-origin:0 0;font-family:'Liberation Sans', sans-serif;">9530010</div>
<div class="t" style="left:1614.70px;top:896.80px;font-size:12.5px;line-height:12.5px;font-weight:400;color:#323232;letter-spacing:-0.196px;transform:scaleX(0.9641);transform-origin:0 0;font-family:'Liberation Sans', sans-serif;">EIDER-SPERRWERK AP</div>
<div class="r" style="left:413px;top:921px;width:1487px;height:1px;background:#f0f0f0"></div>
<div class="t" style="left:421.20px;top:935.80px;font-size:12.5px;line-height:12.5px;font-weight:400;color:#323232;letter-spacing:0.217px;transform:scaleX(1.0540);transform-origin:0 0;font-family:'Liberation Sans', sans-serif;">2000-01-01T00:00:00.000Z</div>
<div class="t" style="left:665.60px;top:935.80px;font-size:12.5px;line-height:12.5px;font-weight:400;color:#323232;letter-spacing:0.209px;transform:scaleX(1.0503);transform-origin:0 0;font-family:'Liberation Sans', sans-serif;">04cbc946-8ee9-4521-ac52-557642cad52c</div>
<div class="t" style="left:1020.30px;top:935.80px;font-size:12.5px;line-height:12.5px;font-weight:400;color:#323232;letter-spacing:-0.177px;transform:scaleX(0.9669);transform-origin:0 0;font-family:'Liberation Sans', sans-serif;">ORLICE</div>
<div class="t" style="left:1303.00px;top:935.80px;font-size:12.5px;line-height:12.5px;font-weight:400;color:#323232;letter-spacing:0.152px;transform:scaleX(1.0439);transform-origin:0 0;font-family:'Liberation Sans', sans-serif;">Orlice</div>
<div class="t" style="left:1476.00px;top:935.80px;font-size:12.5px;line-height:12.5px;font-weight:400;color:#323232;letter-spacing:0.258px;transform:scaleX(1.0589);transform-origin:0 0;font-family:'Liberation Sans', sans-serif;">370</div>
<div class="t" style="left:1614.70px;top:935.80px;font-size:12.5px;line-height:12.5px;font-weight:400;color:#323232;letter-spacing:-0.182px;transform:scaleX(0.9650);transform-origin:0 0;font-family:'Liberation Sans', sans-serif;">TYNISTE</div>
<div class="r" style="left:413px;top:960px;width:1487px;height:1px;background:#f0f0f0"></div>
<div class="t" style="left:421.20px;top:974.80px;font-size:12.5px;line-height:12.5px;font-weight:400;color:#323232;letter-spacing:0.217px;transform:scaleX(1.0540);transform-origin:0 0;font-family:'Liberation Sans', sans-serif;">2000-01-01T00:00:00.000Z</div>
<div class="t" style="left:665.60px;top:974.80px;font-size:12.5px;line-height:12.5px;font-weight:400;color:#323232;letter-spacing:0.220px;transform:scaleX(1.0555);transform-origin:0 0;font-family:'Liberation Sans', sans-serif;">05ca0e33-5c71-4368-b824-2243fcff656c</div>
<div class="t" style="left:1020.30px;top:974.80px;font-size:12.5px;line-height:12.5px;font-weight:400;color:#323232;letter-spacing:-0.111px;transform:scaleX(0.9791);transform-origin:0 0;font-family:'Liberation Sans', sans-serif;">RHEIN-HERNE-KANAL</div>
<div class="t" style="left:1303.00px;top:974.80px;font-size:12.5px;line-height:12.5px;font-weight:400;color:#323232;letter-spacing:-0.159px;transform:scaleX(0.9736);transform-origin:0 0;font-family:'Liberation Sans', sans-serif;">RHK</div>
<div class="t" style="left:1476.00px;top:974.80px;font-size:12.5px;line-height:12.5px;font-weight:400;color:#323232;letter-spacing:0.258px;transform:scaleX(1.0589);transform-origin:0 0;font-family:'Liberation Sans', sans-serif;">27700193</div>
<div class="t" style="left:1614.70px;top:974.80px;font-size:12.5px;line-height:12.5px;font-weight:400;color:#323232;letter-spacing:-0.115px;transform:scaleX(0.9785);transform-origin:0 0;font-family:'Liberation Sans', sans-serif;">WANNE EICKEL SCHLEUSE OW</div>
<div class="r" style="left:413px;top:999px;width:1487px;height:1px;background:#f0f0f0"></div>
<div class="t" style="left:421.20px;top:1013.80px;font-size:12.5px;line-height:12.5px;font-weight:400;color:#323232;letter-spacing:0.217px;transform:scaleX(1.0540);transform-origin:0 0;font-family:'Liberation Sans', sans-serif;">2000-01-01T00:00:00.000Z</div>
<div class="t" style="left:665.60px;top:1013.80px;font-size:12.5px;line-height:12.5px;font-weight:400;color:#323232;letter-spacing:0.216px;transform:scaleX(1.0522);transform-origin:0 0;font-family:'Liberation Sans', sans-serif;">06219dd9-a2c4-463c-9619-623b3c026cbc</div>
<div class="t" style="left:1020.30px;top:1013.80px;font-size:12.5px;line-height:12.5px;font-weight:400;color:#323232;letter-spacing:-0.246px;transform:scaleX(0.9582);transform-origin:0 0;font-family:'Liberation Sans', sans-serif;">OSTSEE</div>
<div class="t" style="left:1303.00px;top:1013.80px;font-size:12.5px;line-height:12.5px;font-weight:400;color:#323232;letter-spacing:-0.246px;transform:scaleX(0.9582);transform-origin:0 0;font-family:'Liberation Sans', sans-serif;">OSTSEE</div>
<div class="t" style="left:1476.00px;top:1013.80px;font-size:12.5px;line-height:12.5px;font-weight:400;color:#323232;letter-spacing:0.258px;transform:scaleX(1.0589);transform-origin:0 0;font-family:'Liberation Sans', sans-serif;">9610070</div>
<div class="t" style="left:1614.70px;top:1013.80px;font-size:12.5px;line-height:12.5px;font-weight:400;color:#323232;letter-spacing:-0.119px;transform:scaleX(0.9774);transform-origin:0 0;font-family:'Liberation Sans', sans-serif;">HEILIGENHAFEN</div>
<div class="r" style="left:404px;top:1031px;width:1504px;height:50px;background:#fff"></div>
</body></html>
